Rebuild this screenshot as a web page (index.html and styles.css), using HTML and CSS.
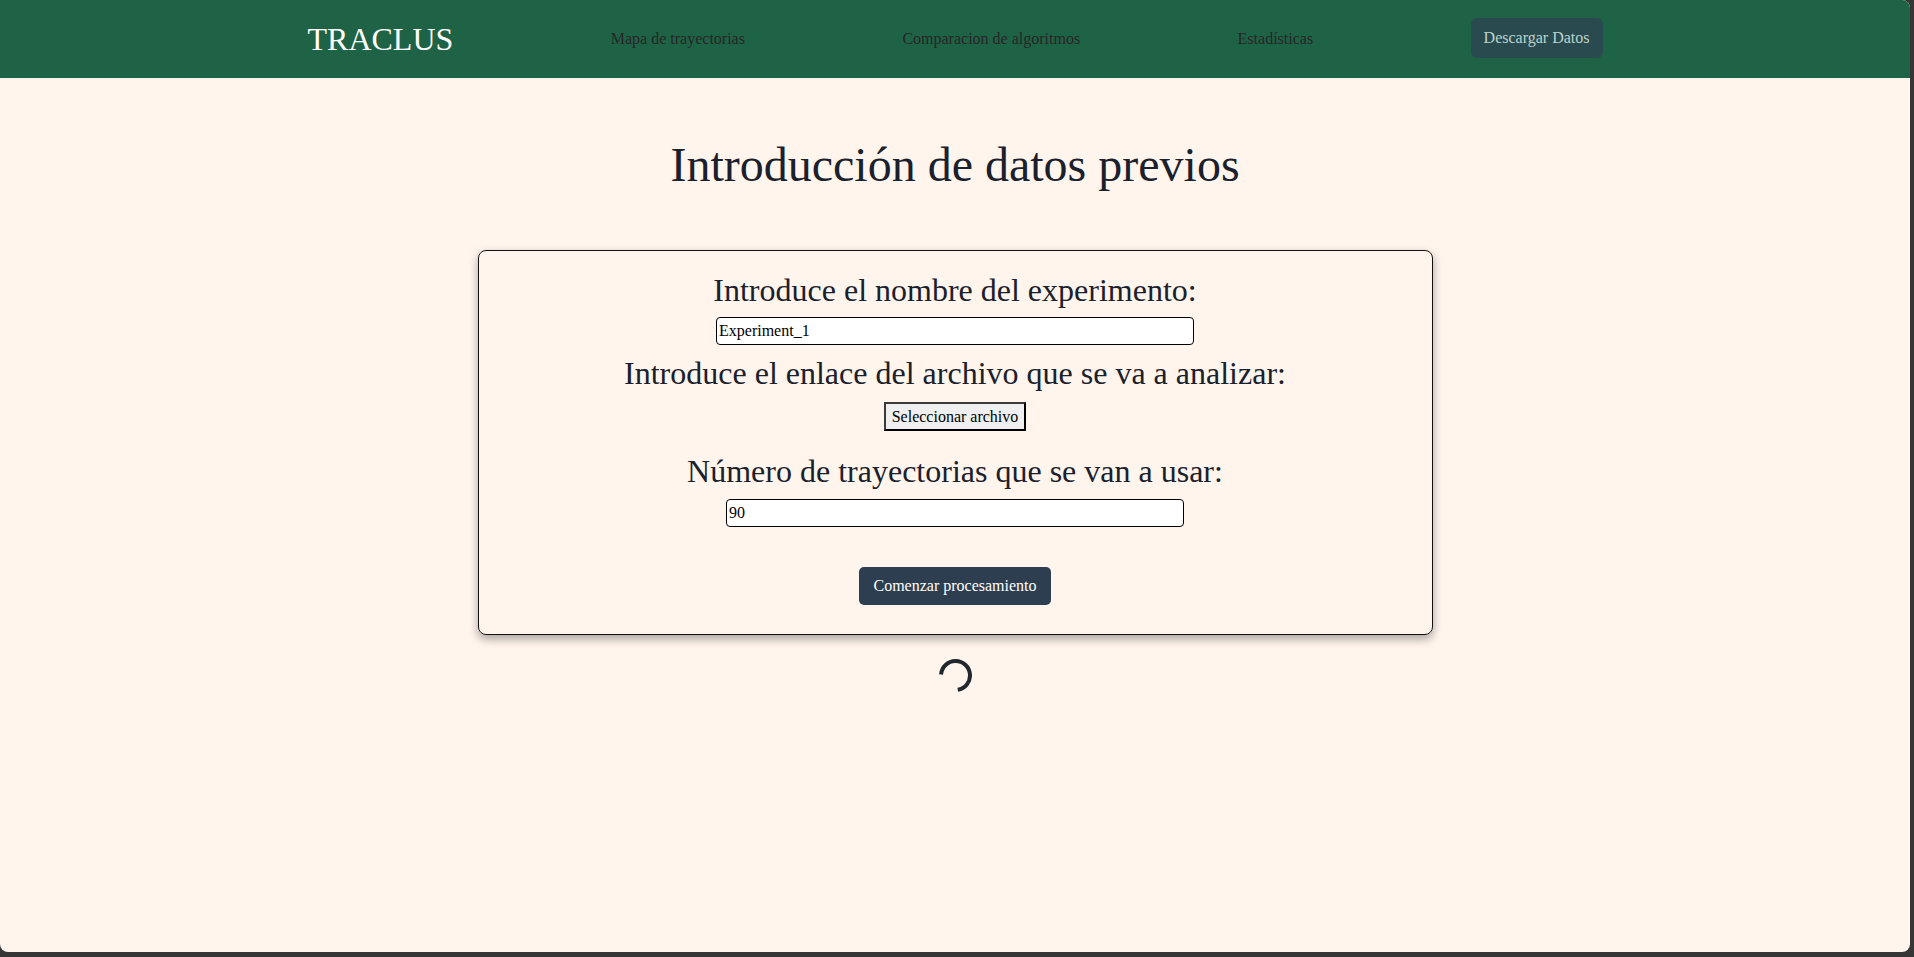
FILE: index.html
```html
<!DOCTYPE html>
<html lang="es">
<head>
<meta charset="utf-8">
<title>TRACLUS</title>
<link rel="stylesheet" href="styles.css">
</head>
<body>
<div class="app">
  <header class="topbar">
    <nav class="topbar-inner">
      <span class="brand">TRACLUS</span>
      <a class="nav-link" href="#">Mapa de trayectorias</a>
      <a class="nav-link" href="#">Comparacion de algoritmos</a>
      <a class="nav-link" href="#">Estadísticas</a>
      <button class="download-btn" type="button">Descargar Datos</button>
    </nav>
  </header>
  <main class="content">
    <h1 class="page-title">Introducción de datos previos</h1>
    <form class="card">
      <h2 class="field-label">Introduce el nombre del experimento:</h2>
      <input class="text-input input-name" type="text" value="Experiment_1">
      <h2 class="field-label label-gap">Introduce el enlace del archivo que se va a analizar:</h2>
      <button class="file-btn" type="button">Seleccionar archivo</button>
      <h2 class="field-label label-gap-lg">Número de trayectorias que se van a usar:</h2>
      <input class="text-input input-count" type="text" value="90">
      <button class="submit-btn" type="button">Comenzar procesamiento</button>
    </form>
    <div class="spinner">
      <svg width="33" height="33" viewBox="0 0 33 33">
        <path d="M2.04 15.49 A14.5 14.5 0 1 1 18.77 30.82" fill="none" stroke="#22272e" stroke-width="4"/>
      </svg>
    </div>
  </main>
</div>
</body>
</html>
```

FILE: styles.css
```css
html, body {
  margin: 0;
  padding: 0;
}

body {
  background: #363636;
  font-family: "Liberation Serif", "Times New Roman", serif;
  color: #1a202c;
  width: 1914px;
  height: 957px;
  overflow: hidden;
}

.app {
  width: 1910px;
  height: 952px;
  background: #fff5ed;
  border-radius: 0 8px 8px 8px;
  overflow: hidden;
}

.topbar {
  background: #1f6346;
  height: 78px;
  display: flex;
  align-items: center;
}

.topbar-inner {
  width: 1295px;
  margin: 0 auto;
  display: flex;
  align-items: center;
  justify-content: space-between;
}

.brand {
  color: #ffffff;
  font-size: 32px;
  line-height: 36px;
}

.nav-link {
  color: #262626;
  font-size: 16px;
  line-height: 18px;
  text-decoration: none;
}

.download-btn {
  font-family: inherit;
  font-size: 16px;
  line-height: 18px;
  color: #bcd3cb;
  background: #294b4f;
  border: none;
  border-radius: 6px;
  padding: 11px 13px;
  height: 40px;
  margin-bottom: 2px;
}

.content {
  display: flex;
  flex-direction: column;
  align-items: center;
}

.page-title {
  font-size: 48px;
  line-height: 54px;
  font-weight: normal;
  margin: 60px 0 58px;
  color: #1a202c;
}

.card {
  box-sizing: border-box;
  width: 955px;
  border: 1px solid #111;
  border-radius: 8px;
  box-shadow: 0 4px 10px rgba(0, 0, 0, 0.35);
  padding: 21px 0 29px;
  display: flex;
  flex-direction: column;
  align-items: center;
  margin: 0;
}

.field-label {
  font-size: 32px;
  line-height: 36px;
  font-weight: normal;
  margin: 0;
  color: #1a202c;
}

.label-gap {
  margin-top: 10px;
}

.label-gap-lg {
  margin-top: 22px;
}

.text-input {
  box-sizing: border-box;
  height: 28px;
  margin-top: 9px;
  font-family: inherit;
  font-size: 16px;
  line-height: 18px;
  padding: 4px 2px;
  border: 1px solid #000;
  border-radius: 4px;
  background: #fff;
  color: #000;
}

.input-name {
  width: 478px;
}

.input-count {
  width: 458px;
  margin-top: 10px;
}

.file-btn {
  box-sizing: border-box;
  height: 29px;
  margin-top: 11px;
  font-family: inherit;
  font-size: 16px;
  line-height: 19px;
  padding: 3px 6px;
  background: #efefef;
  color: #000;
  border: 2px solid;
  border-color: #3a3a3a #000 #000 #3a3a3a;
  border-radius: 0;
}

.submit-btn {
  box-sizing: border-box;
  height: 38px;
  margin-top: 40px;
  font-family: inherit;
  font-size: 16px;
  line-height: 18px;
  padding: 10px 14px;
  background: #2d3e50;
  color: #fff;
  border: none;
  border-radius: 5px;
}

.spinner {
  margin-top: 24px;
  width: 33px;
  height: 33px;
}

.spinner svg {
  display: block;
}
```
